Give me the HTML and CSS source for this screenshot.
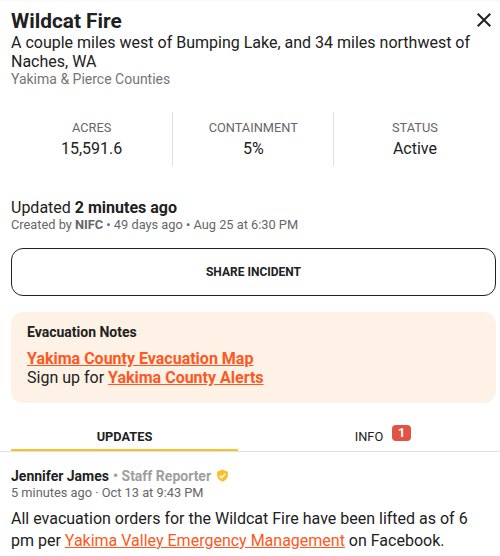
FILE: index.html
```html
<!DOCTYPE html>
<html lang="en">
<head>
  <meta charset="UTF-8" />
  <meta name="viewport" content="width=device-width, initial-scale=1.0" />
  <title>Wildcat Fire</title>
  <link rel="stylesheet" href="styles.css">
</head>
<body>
  <header class="header">
    <div class="title-row">
      <h1>Wildcat Fire</h1>
      <button class="close" aria-label="Close">
        <svg width="14" height="14" viewBox="0 0 14 14"><path d="M.7.7L13.3 13.3M13.3.7L.7 13.3" stroke="#212121" stroke-width="2" fill="none"/></svg>
      </button>
    </div>
    <p class="location">A couple miles west of Bumping Lake, and 34 miles northwest of Naches, WA</p>
    <p class="counties">Yakima &amp; Pierce Counties</p>
  </header>

  <div class="stats">
    <div class="stat"><span class="stat-label">ACRES</span><span class="stat-value">15,591.6</span></div>
    <div class="stat"><span class="stat-label">CONTAINMENT</span><span class="stat-value">5%</span></div>
    <div class="stat"><span class="stat-label">STATUS</span><span class="stat-value">Active</span></div>
  </div>

  <div class="updated">
    <p class="updated-time">Updated <b>2 minutes ago</b></p>
    <p class="created">Created by <b>NIFC</b> • 49 days ago • Aug 25 at 6:30 PM</p>
  </div>

  <button class="share">SHARE INCIDENT</button>

  <section class="notes">
    <h2>Evacuation Notes</h2>
    <p><a href="#"><b>Yakima County Evacuation Map</b></a></p>
    <p>Sign up for <a href="#"><b>Yakima County Alerts</b></a></p>
  </section>

  <nav class="tabs">
    <a class="tab active">UPDATES</a>
    <a class="tab"><span class="tab-label">INFO<span class="badge">1</span></span></a>
  </nav>

  <article class="post">
    <div class="author">
      <b>Jennifer James</b><span class="role">• Staff Reporter</span>
      <svg class="verified" width="13" height="13" viewBox="0 0 24 24"><path fill="#fbc02d" d="M12 1L2 5v6c0 5.55 4.24 10.74 10 12 5.76-1.26 10-6.45 10-12V5L12 1z"/><path fill="none" stroke="#fff" stroke-width="2.4" d="M6.5 12.5l3.8 3.6 7-7.4"/></svg>
    </div>
    <p class="post-time">5 minutes ago · Oct 13 at 9:43 PM</p>
    <p class="post-text">All evacuation orders for the Wildcat Fire have been lifted as of 6 pm per <a href="#">Yakima Valley Emergency Management</a> on Facebook.</p>
  </article>
</body>
</html>
```

FILE: styles.css
```css
* { box-sizing: border-box; }
body { font-family: Roboto, sans-serif; margin: 0; color: #212121; background: #fff; font-size: 16px; overflow: hidden; }
h1, h2, p { margin: 0; }
b { font-weight: 700; }
button { font-family: inherit; color: inherit; }
a { color: #ff5722; }
.header { padding: 8px 11px 0; box-shadow: inset 0 2px 2px -1px #f8f8f8; }
.title-row { display: flex; justify-content: space-between; height: 25px; }
h1 { font-size: 20.8px; line-height: 26px; font-weight: 700; }
.close { display: flex; align-items: center; justify-content: center; border: none; background: none; padding: 0; margin-right: -5px; width: 20px; height: 24px; }
.location { line-height: 19px; }
.counties { font-size: 14px; line-height: 17px; color: #757575; }
.stats { display: flex; margin: 24px 5px 0 11px; height: 54px; }
.stat { flex: 1; display: flex; flex-direction: column; align-items: center; padding: 6px 0 0 0.5px; }
.stat + .stat { border-left: 1px solid #e0e0e0; }
.stat-label { font-size: 12.8px; line-height: 20px; color: #666; }
.stat-value { line-height: 21px; }
.updated { padding: 32px 11px 0; }
.updated-time { line-height: 20px; }
.created { font-size: 12.8px; line-height: 14px; color: #666; }
.share { display: block; width: 485px; height: 48px; margin: 16px 0 0 11px; background: #fff; border: 1px solid #212121; border-radius: 12px; font-size: 12px; font-weight: 700; }
.notes { margin: 16px 4px 0 11px; height: 91px; padding: 12px 16px; background: #fef1e6; border-radius: 12px; line-height: 19px; }
h2 { font-size: 14px; line-height: 16px; font-weight: 700; margin-bottom: 9px; }
.tabs { display: flex; margin-top: 19px; padding-left: 11px; height: 30px; border-bottom: 1px solid #e0e0e0; font-size: 12.8px; }
.tab { flex: 1; display: flex; justify-content: center; align-items: center; height: 29px; color: #212121; }
.active { flex: 0 0 227px; font-weight: 700; border-bottom: 2px solid #fbc02d; padding-top: 2px; }
.tab-label { position: relative; }
.badge { position: absolute; left: 100%; top: -4px; margin-left: 9px; width: 19px; height: 16px; border-radius: 4px; background: #e25344; color: #fff; font-weight: 700; text-align: center; line-height: 16px; }
.post { padding: 15px 11px 0; }
.author { display: flex; align-items: center; font-size: 14px; line-height: 18px; }
.role { color: #9e9e9e; font-weight: 700; margin-left: 4px; }
.verified { margin: -2px 0 0 5px; }
.post-time { font-size: 12.8px; line-height: 15px; color: #666; }
.post-text { margin-top: 8px; line-height: 22px; }
```
